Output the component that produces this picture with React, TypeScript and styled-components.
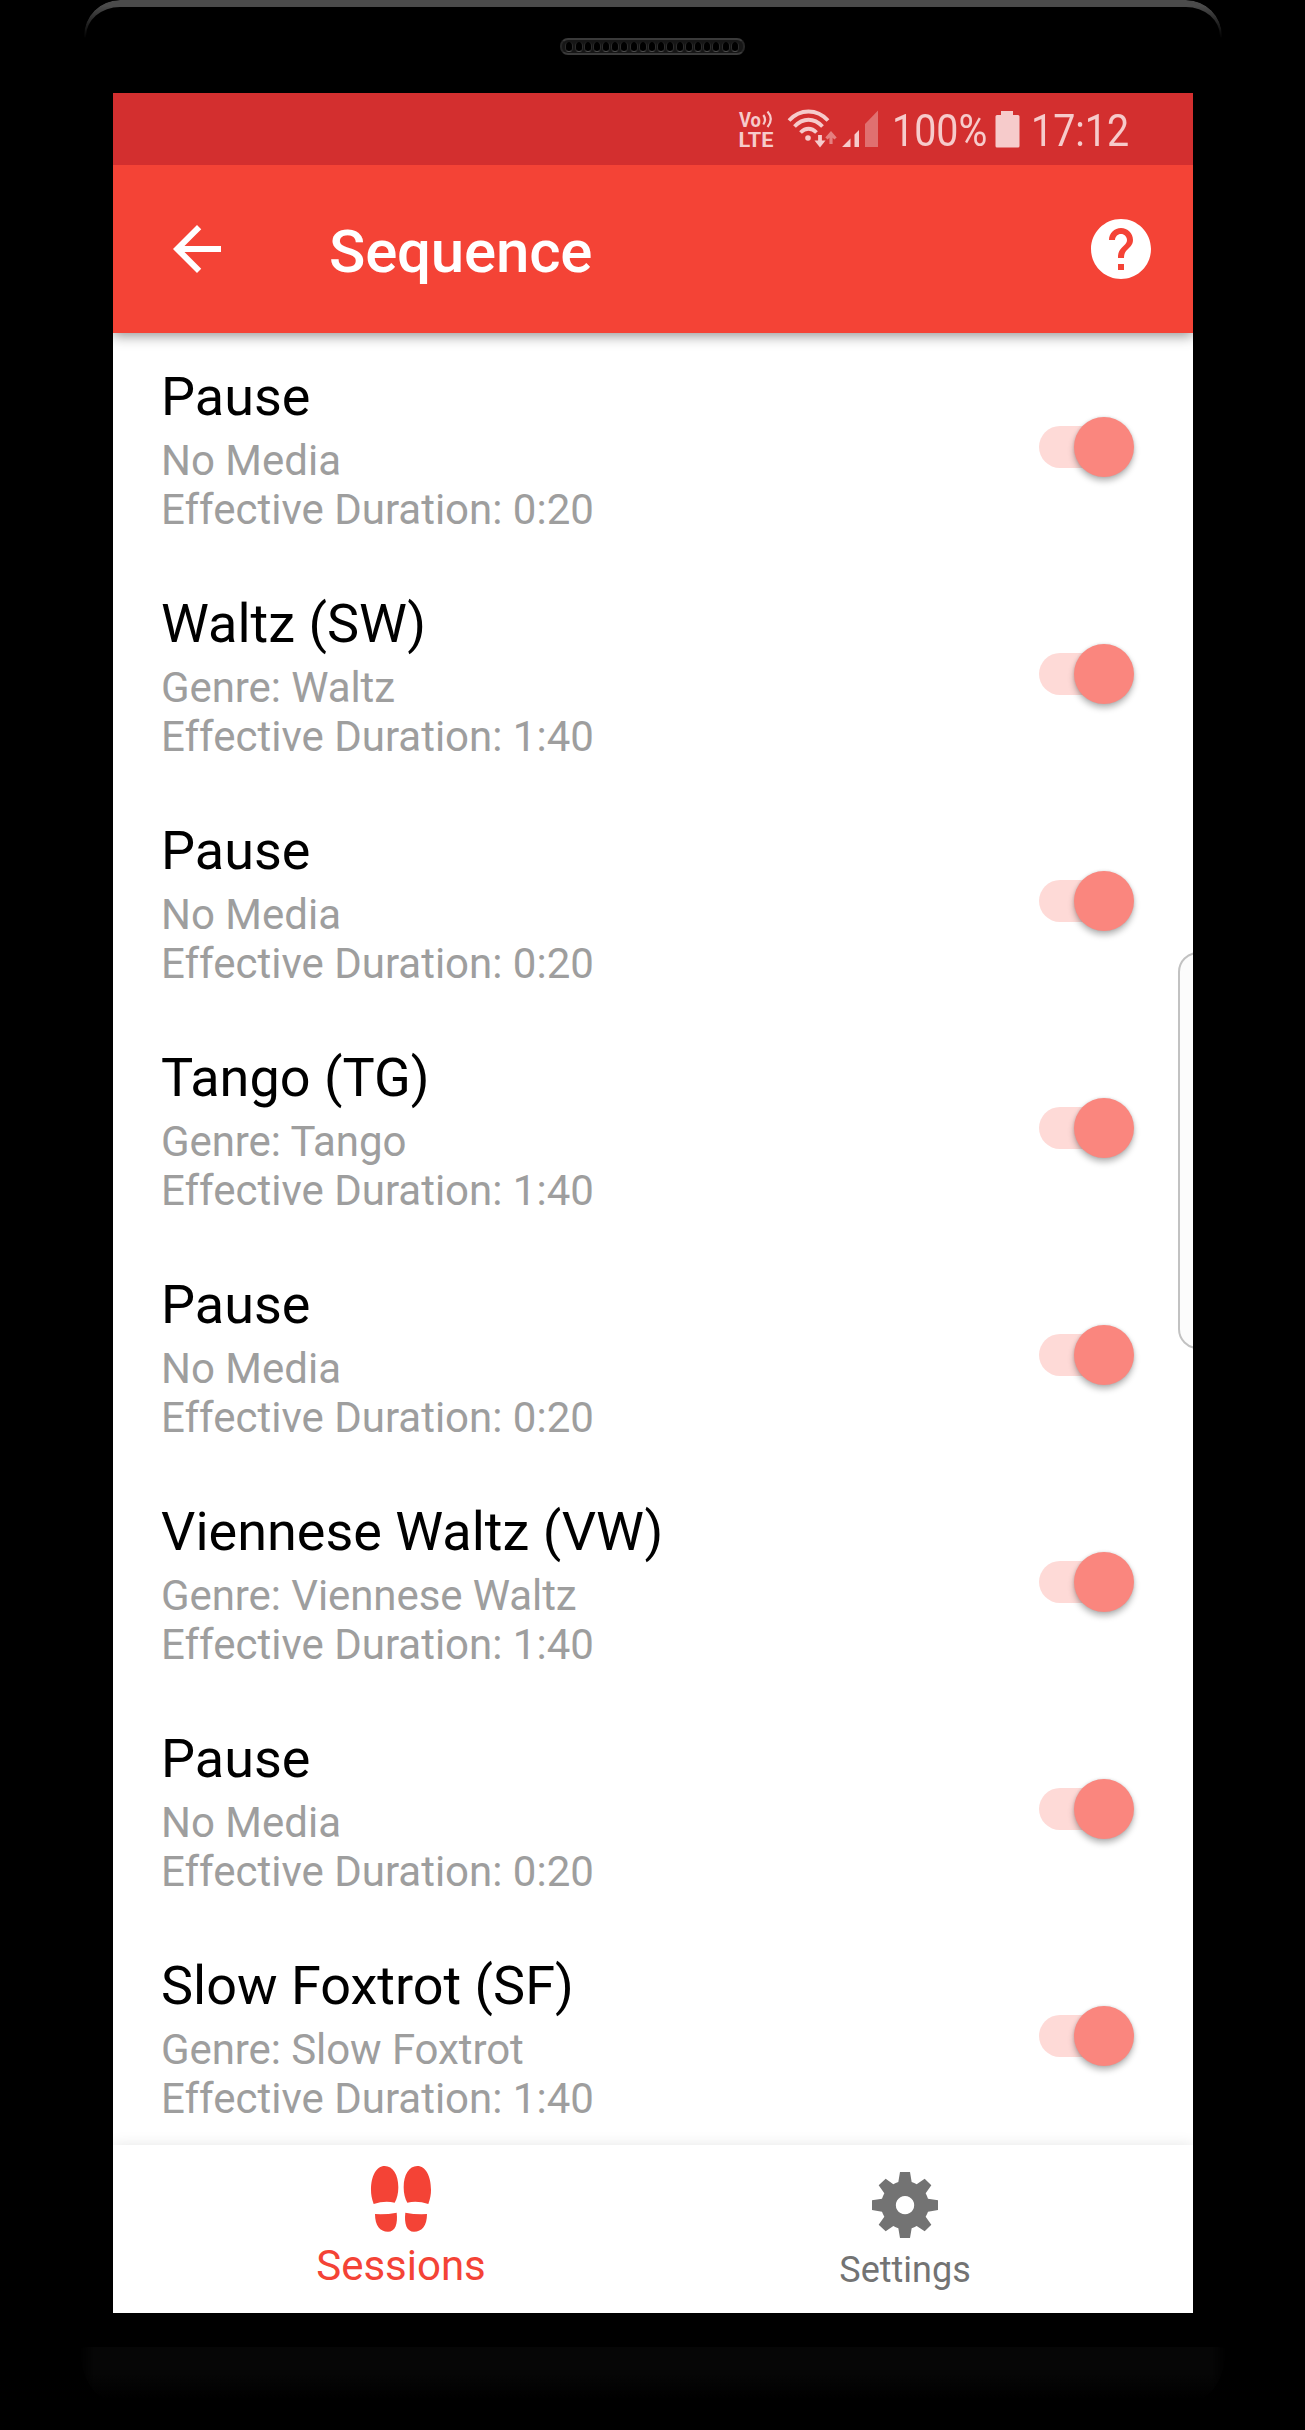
import React from 'react';
import styled, { createGlobalStyle } from 'styled-components';

const GlobalStyle = createGlobalStyle`
  * { box-sizing: border-box; }
  body { margin: 0; background: #000; font-family: Roboto, 'Liberation Sans', sans-serif; }
`;

const Device = styled.div`
  position: relative;
  width: 1305px;
  height: 2430px;
  overflow: hidden;
  background: #000;
  display: flex;
  flex-direction: column;
  align-items: center;
  padding: 38px 0 0 1px;
`;

const TopRim = styled.div`
  position: absolute;
  left: 84px;
  top: 0;
  width: 1138px;
  height: 60px;
  border: solid #4b4b4b;
  border-width: 7px 2px 0;
  border-radius: 36px 36px 0 0;
  mask-image: linear-gradient(#000 6px, transparent 38px);
`;

const BottomRim = styled.div`
  position: absolute;
  left: 80px;
  top: 2347px;
  width: 1146px;
  height: 54px;
  border-radius: 8px 8px 34px 34px / 2px 2px 52px 52px;
  background: linear-gradient(#060606 50%, #000 96%);
  mask-image: linear-gradient(90deg, transparent, #000 14px, #000 1132px, transparent);
`;

const Speaker = styled.div`
  width: 185px;
  height: 17px;
  margin-left: -2px;
  border-radius: 8px;
  background: #161616;
  border: 2px solid #3a3a3a;
  border-left-color: #262626;
  border-right-color: #262626;
  display: flex;
  align-items: center;
  justify-content: center;
  gap: 1.2px;
`;

const Hole = styled.i`
  width: 8px;
  height: 10px;
  border-radius: 4px;
  background: #000;
  border-bottom: 1.5px solid #505050;
  border-left: 1px solid #2c2c2c;
  border-right: 1px solid #2c2c2c;
`;

const Screen = styled.main`
  position: relative;
  width: 1080px;
  height: 2220px;
  margin-top: 38px;
  flex: none;
  overflow: hidden;
  background: #fff;
  display: flex;
  flex-direction: column;
`;

const StatusBar = styled.div`
  position: relative;
  z-index: 3;
  height: 72px;
  flex: none;
  background: #d32f2f;
  color: #f6cbcb;
  display: flex;
  align-items: flex-start;
  padding: 0 63px 0 0;
  justify-content: flex-end;
`;

const StatusText = styled.span<{ $w: number; $ml: number }>`
  width: ${p => p.$w}px;
  margin-left: ${p => p.$ml}px;
  margin-top: 11px;
  font-size: 45px;
  line-height: 53px;
  white-space: nowrap;
  transform: scaleX(0.875);
  transform-origin: left;
`;

const StatusSvg = styled.svg`
  display: block;
  flex: none;
`;

const AppBar = styled.header`
  position: relative;
  z-index: 2;
  height: 168px;
  flex: none;
  background: #f44336;
  color: #fff;
  display: flex;
  align-items: center;
  padding: 0 36px 0 48px;
  box-shadow: 0 3px 12px rgba(0, 0, 0, 0.42);
`;

const AppTitle = styled.h1`
  margin: 5px 0 0 96px;
  flex: 1;
  font-size: 60px;
  line-height: 70px;
  font-weight: 500;
  letter-spacing: -0.2px;
`;

const List = styled.ul`
  list-style: none;
  margin: 0;
  padding: 0;
  flex: 1;
  min-height: 0;
  overflow: hidden;
`;

const Row = styled.li`
  height: 227px;
  display: flex;
  align-items: center;
  justify-content: space-between;
  padding: 0 59px 0 48px;
`;

const RowText = styled.div`
  display: flex;
  flex-direction: column;
  padding-top: 6px;
`;

const RowTitle = styled.span`
  font-size: 54px;
  line-height: 64px;
  color: #000;
  margin-bottom: 7px;
`;

const RowSub = styled.span<{ $tracking?: number }>`
  font-size: 42px;
  line-height: 49px;
  color: #9e9e9e;
  letter-spacing: ${p => p.$tracking ?? 0}px;
`;

const Track = styled.div`
  width: 90px;
  height: 42px;
  border-radius: 21px;
  background: #fedad7;
  margin-right: 5px;
  display: flex;
  align-items: center;
  justify-content: flex-end;
`;

const Thumb = styled.div`
  flex: none;
  width: 60px;
  height: 60px;
  border-radius: 50%;
  margin-right: -5px;
  background: #fa867e;
  box-shadow: 0 4px 6px rgba(0, 0, 0, 0.28), 0 0 3px rgba(0, 0, 0, 0.12);
`;

const EdgeHandle = styled.div`
  position: absolute;
  left: 1065px;
  top: 859px;
  width: 40px;
  height: 397px;
  border: 2px solid #c2c2c2;
  border-radius: 20px;
  background: #fcfcfc;
`;

const TabBar = styled.nav`
  position: relative;
  height: 168px;
  flex: none;
  background: #fff;
  display: flex;
  justify-content: center;
  box-shadow: 0 0 14px rgba(0, 0, 0, 0.1);
`;

const Tab = styled.div<{ $active?: boolean }>`
  width: 504px;
  display: flex;
  flex-direction: column;
  align-items: center;
  padding-top: ${p => (p.$active ? 18 : 24)}px;
  color: ${p => (p.$active ? '#f44336' : '#737373')};
  font-size: ${p => (p.$active ? 42 : 36)}px;
  line-height: ${p => (p.$active ? 52 : 48)}px;
`;

const TabIcon = styled.svg`
  width: 72px;
  height: 72px;
  margin-bottom: 5px;
  fill: currentColor;
`;

const items: [string, string, string][] = [
  ['Pause', 'No Media', '0:20'],
  ['Waltz (SW)', 'Genre: Waltz', '1:40'],
  ['Pause', 'No Media', '0:20'],
  ['Tango (TG)', 'Genre: Tango', '1:40'],
  ['Pause', 'No Media', '0:20'],
  ['Viennese Waltz (VW)', 'Genre: Viennese Waltz', '1:40'],
  ['Pause', 'No Media', '0:20'],
  ['Slow Foxtrot (SF)', 'Genre: Slow Foxtrot', '1:40'],
];

const Connectivity = () => (
  <StatusSvg width="146" height="72" viewBox="0 0 146 72" fill="none">
    <g fill="#f6cbcb" fontFamily="Roboto, sans-serif" fontWeight="700">
      <text x="1" y="33.5" fontSize="20" textLength="22" lengthAdjust="spacingAndGlyphs">Vo</text>
      <text x="0.5" y="54" fontSize="20" textLength="35" lengthAdjust="spacingAndGlyphs">LTE</text>
    </g>
    <g stroke="#f6cbcb" strokeWidth="2.2">
      <path d="M25.3 22q3.4 4.500 0 9.500M29.500 18.500q6.600 7.500 0 15.500" />
    </g>
    <g stroke="#f6cbcb" strokeWidth="3.800">
      <path d="M51 27.500C62 15.500 79 15.500 90 27.500" />
      <path d="M56.500 33.500C65 24.500 76 24.500 84.500 33.500" />
      <path d="M62.500 39.500C67.500 34.500 73.500 34.500 78.500 39.500" />
      <path d="M82 42v9.500" />
    </g>
    <circle cx="70" cy="45" r="2.800" fill="#f6cbcb" />
    <path d="M76.500 47.500L82 54.500 87.500 47.500z" fill="#f6cbcb" />
    <path d="M93 51V41M88.500 45.500L93 40.500l4.500 5" stroke="#e47f7f" strokeWidth="3.200" />
    <path d="M104 54L112.500 45.500V54zM116.500 54V41.500L121 37V54z" fill="#f6cbcb" />
    <path d="M127 54V31L140 17.500V54z" fill="#e07070" />
  </StatusSvg>
);

export default function App() {
  return (
    <>
      <GlobalStyle />
      <Device>
        <TopRim />
        <BottomRim />
        <Speaker>
          {Array.from({ length: 19 }, (_, i) => (
            <Hole key={i} />
          ))}
        </Speaker>
        <Screen>
          <StatusBar>
            <Connectivity />
            <StatusText $w={95} $ml={8}>100%</StatusText>
            <StatusSvg width="38" height="72" viewBox="0 0 38 72">
              <path d="M14 18h12v4h5a1.500 1.500 0 0 1 1.500 1.500V53a1.500 1.500 0 0 1-1.500 1.500H10A1.500 1.500 0 0 1 8.500 53V23.500A1.500 1.500 0 0 1 10 22h4z" fill="#f6cbcb" />
            </StatusSvg>
            <StatusText $w={99} $ml={6}>17:12</StatusText>
          </StatusBar>
          <AppBar>
            <svg width="72" height="72" viewBox="0 0 24 24" fill="#fff">
              <path d="M20 11H7.830l5.590-5.590L12 4l-8 8 8 8 1.410-1.410L7.830 13H20v-2z" />
            </svg>
            <AppTitle>Sequence</AppTitle>
            <svg width="72" height="72" viewBox="0 0 24 24" fill="#fff">
              <path d="M12 2C6.480 2 2 6.480 2 12s4.480 10 10 10 10-4.480 10-10S17.520 2 12 2zm1 17h-2v-2h2v2zm2.070-7.750l-.9.920C13.450 12.900 13 13.500 13 15h-2v-.5c0-1.100.450-2.100 1.170-2.830l1.240-1.260c.370-.360.590-.860.590-1.410 0-1.100-.9-2-2-2s-2 .9-2 2H8c0-2.210 1.790-4 4-4s4 1.790 4 4c0 .880-.360 1.680-.930 2.250z" />
            </svg>
          </AppBar>
          <List>
            {items.map(([title, media, time], i) => (
              <Row key={i}>
                <RowText>
                  <RowTitle>{title}</RowTitle>
                  <RowSub $tracking={media.startsWith('Genre') ? -0.08 : 0}>{media}</RowSub>
                  <RowSub>Effective Duration: {time}</RowSub>
                </RowText>
                <Track>
                  <Thumb />
                </Track>
              </Row>
            ))}
          </List>
          <TabBar>
            <Tab $active>
              <TabIcon viewBox="195 99 216 216">
                <path d="M221 222C215 205 213 194 213 180C213 138 229 108 254 108C279 108 295 134 295 172C295 191 291 206 284 218Q254 211 221 222zM225 252Q258 254 290 248C294 281 286 305 264 305C240 305 225 287 225 252z" />
                <path d="M385 222C391 205 393 194 393 180C393 138 377 108 352 108C327 108 311 134 311 172C311 191 315 206 322 218Q352 211 385 222zM381 252Q348 254 316 248C312 281 320 305 342 305C366 305 381 287 381 252z" />
              </TabIcon>
              Sessions
            </Tab>
            <Tab>
              <TabIcon viewBox="207 117 216 216">
                <path fillRule="evenodd" d="M300 126H330L335 156Q343 159 350 163L374 146 394 166 377 190Q381 198 384 206L414 211V240L384 245Q381 253 377 260L394 284 374 304 350 288Q343 292 335 295L330 324H300L295 295Q287 292 280 288L257 304 236 284 253 260Q249 253 246 245L216 240V211L246 206Q249 198 253 190L236 166 257 146 280 163Q287 159 295 156zM315 198a27.500 27.500 0 1 0 .1 0z" />
              </TabIcon>
              Settings
            </Tab>
          </TabBar>
          <EdgeHandle />
        </Screen>
      </Device>
    </>
  );
}
